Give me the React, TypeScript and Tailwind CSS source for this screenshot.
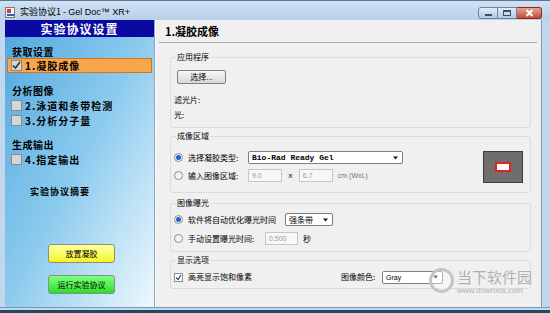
import React from 'react';

const cjk = { fontFamily: '"Noto Sans CJK SC", "Liberation Sans", sans-serif' };
const latin = { fontFamily: '"Liberation Sans", "Noto Sans CJK SC", sans-serif' };
const mono = { fontFamily: '"Liberation Mono", "Noto Sans CJK SC", monospace' };

function SideCheck({ checked }: { checked?: boolean }) {
  return (
    <div className="w-[11px] h-[11px] border border-[#8a8a8a] bg-[#d6d6d6] flex items-center justify-center shrink-0">
      {checked && (
        <svg width="9" height="9" viewBox="0 0 9 9">
          <path d="M1 4.5 L3.5 7 L8 1" stroke="#333" strokeWidth="1.6" fill="none" />
        </svg>
      )}
    </div>
  );
}

function SideItem({ label, checked, active }: { label: string; checked?: boolean; active?: boolean }) {
  return (
    <div
      className={
        'h-[15px] mx-[2px] flex items-center gap-[3px] pl-[3px] ' +
        (active ? 'bg-[#f8a54c] border border-[#c8782a]' : 'border border-transparent')
      }
    >
      <SideCheck checked={checked} />
      <span className="text-[10px] font-bold tracking-[1px] leading-[12px] text-black whitespace-nowrap">{label}</span>
    </div>
  );
}

function Radio({ on }: { on?: boolean }) {
  return (
    <div className="w-[9px] h-[9px] rounded-full border border-[#8f8f8f] bg-gradient-to-br from-[#e8e8e8] to-white flex items-center justify-center shrink-0">
      {on && <div className="w-[5px] h-[5px] rounded-full bg-[#1e63c8]" />}
    </div>
  );
}

function Combo({ text, w, font }: { text: string; w: string; font?: React.CSSProperties }) {
  return (
    <div className={'h-[13px] bg-white border border-[#7d7d7d] rounded-[2px] flex items-center ' + w}>
      <span className="flex-1 pl-[3px] text-[8px] leading-[11px] text-black whitespace-nowrap" style={font}>
        {text}
      </span>
      <svg width="12" height="8" viewBox="0 0 12 8" className="shrink-0">
        <path d="M3 2.5 L8 2.5 L5.5 5.5 Z" fill="#111" />
      </svg>
    </div>
  );
}

function Input({ value, w }: { value: string; w: string }) {
  return (
    <div className={'h-[13px] bg-[#f7f7f7] border border-[#c6c6c6] flex items-center pl-[3px] ' + w}>
      <span className="text-[7px] leading-none text-[#9a9a9a]" style={latin}>{value}</span>
    </div>
  );
}

function Group({ title, children, className }: { title: string; children: React.ReactNode; className?: string }) {
  return (
    <fieldset className={'border border-[#d6dde4] rounded-[3px] px-[3px] ' + (className || '')}>
      <legend className="ml-[2px] px-[1px] text-[8px] leading-[12px] text-black">{title}</legend>
      {children}
    </fieldset>
  );
}

export default function App() {
  return (
    <div className="w-[550px] h-[313px] overflow-hidden flex flex-col bg-[#c2d6ec]" style={cjk}>
      {/* Title bar */}
      <div className="h-[20px] flex items-start border-t border-[#5d7896] bg-gradient-to-b from-[#d0e1f3] to-[#b9d0e9]">
        <svg width="11" height="11" viewBox="0 0 11 11" className="ml-[5px] mt-[6px]">
          <rect x="0.5" y="0.5" width="9" height="10" fill="#f4f4f4" stroke="#7a7a7a" />
          <rect x="2" y="2" width="4" height="4" fill="#d83a3a" />
          <rect x="2" y="7" width="7" height="2" fill="#2b62c8" />
        </svg>
        <span className="ml-[4px] mt-[5px] text-[9px] leading-[11px] text-black whitespace-nowrap">
          实验协议1 - <span style={latin}>Gel Doc™ XR+</span>
        </span>
        <div className="ml-auto mr-[8px] mt-[6px] flex">
          <div className="w-[20px] h-[12px] rounded-l-[3px] border border-[#6c84a4] bg-gradient-to-b from-[#e0ebf7] to-[#b4c9e2] flex items-center justify-center">
            <div className="w-[7px] h-[2px] bg-[#3d4f66] mt-[3px]" />
          </div>
          <div className="w-[19px] h-[12px] border-y border-r border-[#6c84a4] bg-gradient-to-b from-[#e0ebf7] to-[#b4c9e2] flex items-center justify-center">
            <div className="w-[8px] h-[6px] border border-[#3d4f66] border-t-2" />
          </div>
          <div className="w-[25px] h-[12px] rounded-r-[3px] border-y border-r border-[#8a2a20] bg-gradient-to-b from-[#e9a193] to-[#c44a36] flex items-center justify-center">
            <svg width="9" height="8" viewBox="0 0 9 8">
              <path d="M1.5 1 L7.5 7 M7.5 1 L1.5 7" stroke="#fff" strokeWidth="2" />
            </svg>
          </div>
        </div>
      </div>

      {/* Body */}
      <div className="flex-1 flex min-h-0">
        <div className="w-[5px] shrink-0" />

        {/* Sidebar */}
        <div className="w-[150px] shrink-0 flex flex-col bg-gradient-to-br from-[#4ea7df] via-[#8ccbee] to-[#eef8fd] border-r border-[#8ba3bd]">
          <div className="h-[17px] bg-[#0a0aa2] flex items-center justify-center">
            <span className="text-[12px] font-bold leading-none text-white tracking-[1px]">实验协议设置</span>
          </div>
          <div className="mt-[9px] pl-[7px] text-[10px] font-bold leading-[12px] tracking-[0.5px] text-black">获取设置</div>
          <SideItem label="1.凝胶成像" checked active />
          <div className="mt-[12px] pl-[7px] text-[10px] font-bold leading-[12px] tracking-[0.5px] text-black">分析图像</div>
          <div className="mt-[1px]">
            <SideItem label="2.泳道和条带检测" />
          </div>
          <SideItem label="3.分析分子量" />
          <div className="mt-[11px] pl-[7px] text-[10px] font-bold leading-[12px] tracking-[0.5px] text-black">生成输出</div>
          <div className="mt-[1px]">
            <SideItem label="4.指定输出" />
          </div>
          <div className="mt-[19px] pl-[25px] text-[9px] font-bold leading-[12px] tracking-[1px] text-black">实验协议摘要</div>
          <div className="mt-[46px] ml-[43px] w-[67px] h-[19px] rounded-[3px] border border-[#8c8c8c] bg-gradient-to-b from-[#ffff9a] to-[#f6f600] flex items-center justify-center">
            <span className="text-[8px] leading-none text-black">放置凝胶</span>
          </div>
          <div className="mt-[12px] ml-[43px] w-[67px] h-[19px] rounded-[3px] border border-[#8c8c8c] bg-gradient-to-b from-[#7dff7d] to-[#1fe01f] flex items-center justify-center">
            <span className="text-[8px] leading-none text-black">运行实验协议</span>
          </div>
        </div>

        {/* Content */}
        <div className="w-[386px] shrink-0 bg-[#f0f0f0] border-l border-white flex flex-col relative">
          <div className="h-[23px] mx-[3px] mr-[4px] border-b border-[#a9a9a9] flex items-center pl-[6px]">
            <span className="text-[11px] font-bold leading-none text-black">1.凝胶成像</span>
          </div>

          <div className="ml-[14px] mr-[10px] mt-[8px] flex flex-col">
            <Group title="应用程序" className="pb-[6px]">
              <div className="mt-[7px] ml-[3px] w-[49px] h-[14px] rounded-[2px] border border-[#7f7f7f] bg-gradient-to-b from-[#f6f6f6] to-[#d8d8d8] flex items-center justify-center">
                <span className="text-[8px] leading-none text-black">选择<span style={latin}>...</span></span>
              </div>
              <div className="mt-[10px] text-[8px] leading-[12px] text-black">滤光片:</div>
              <div className="mt-[3px] text-[8px] leading-[12px] text-black">光:</div>
            </Group>

            <Group title="成像区域" className="mt-[2px] pb-[9px]">
              <div className="mt-[9px] flex items-start">
                <div className="flex flex-col gap-[5px]">
                  <div className="h-[13px] flex items-center">
                    <Radio on />
                    <span className="ml-[5px] w-[60px] text-[8px] leading-none text-black">选择凝胶类型:</span>
                    <Combo text="Bio-Rad Ready Gel" w="w-[155px]" font={{ ...mono, fontWeight: 700 }} />
                  </div>
                  <div className="h-[13px] flex items-center">
                    <Radio />
                    <span className="ml-[5px] w-[60px] text-[8px] leading-none text-black">输入图像区域:</span>
                    <Input value="9.0" w="w-[34px]" />
                    <span className="mx-[6px] text-[8px] leading-none text-black" style={mono}>x</span>
                    <Input value="6.7" w="w-[34px]" />
                    <span className="ml-[5px] text-[7px] leading-none text-[#777]" style={latin}>cm (WxL)</span>
                  </div>
                </div>
                <div className="ml-auto mr-[4px] w-[40px] h-[32px] bg-[#6e6e6e] border border-[#3c3c3c] flex items-center justify-center">
                  <div className="w-[16px] h-[10px] bg-white border-2 border-[#e0231f]" />
                </div>
              </div>
            </Group>

            <Group title="图像曝光" className="mt-[4px] pb-[6px]">
              <div className="mt-[4px] h-[13px] flex items-center">
                <Radio on />
                <span className="ml-[5px] w-[97px] text-[8px] leading-none text-black whitespace-nowrap">软件将自动优化曝光时间</span>
                <Combo text="强条带" w="w-[48px]" font={cjk} />
              </div>
              <div className="mt-[6px] h-[13px] flex items-center">
                <Radio />
                <span className="ml-[5px] w-[77px] text-[8px] leading-none text-black">手动设置曝光时间:</span>
                <Input value="0.500" w="w-[33px]" />
                <span className="ml-[5px] text-[8px] leading-none text-black">秒</span>
              </div>
            </Group>

            <Group title="显示选项" className="mt-[2px] pb-[4px]">
              <div className="mt-[4px] h-[14px] flex items-center">
                <div className="w-[9px] h-[9px] border border-[#8f8f8f] bg-white flex items-center justify-center shrink-0">
                  <svg width="7" height="7" viewBox="0 0 7 7">
                    <path d="M1 3.5 L3 5.5 L6 1" stroke="#2a4f8a" strokeWidth="1.3" fill="none" />
                  </svg>
                </div>
                <span className="ml-[5px] w-[153px] text-[8px] leading-none text-black">高亮显示饱和像素</span>
                <span className="w-[41px] text-[8px] leading-none text-black">图像颜色:</span>
                <Combo text="Gray" w="w-[61px]" font={{ ...latin, fontSize: '7px' }} />
              </div>
            </Group>
          </div>

          {/* watermark overlay */}
          <div className="absolute left-[273px] top-[248px] flex items-start pointer-events-none">
            <div className="w-[25px] h-[25px] rounded-full border-[3px] border-[#c4c4c4] bg-white/40" />
            <div className="ml-[3px] mt-[1px] flex flex-col whitespace-nowrap">
              <span className="text-[15px] leading-[16px] text-[#b0b0b0] tracking-[0px]">当下软件园</span>
              <span className="mt-[1px] text-[8px] leading-[9px] text-[#b0b0b0]" style={latin}>www.downxia.com</span>
            </div>
          </div>
        </div>

        <div className="flex-1 border-l border-[#7d97b3]" />
      </div>

      {/* Bottom frame */}
      <div className="h-[6px] border-t border-[#7d97b3] bg-[#c2d6ec]">
        <div className="mt-[2px] h-[3px] bg-[#1d4a63]" />
      </div>
    </div>
  );
}
